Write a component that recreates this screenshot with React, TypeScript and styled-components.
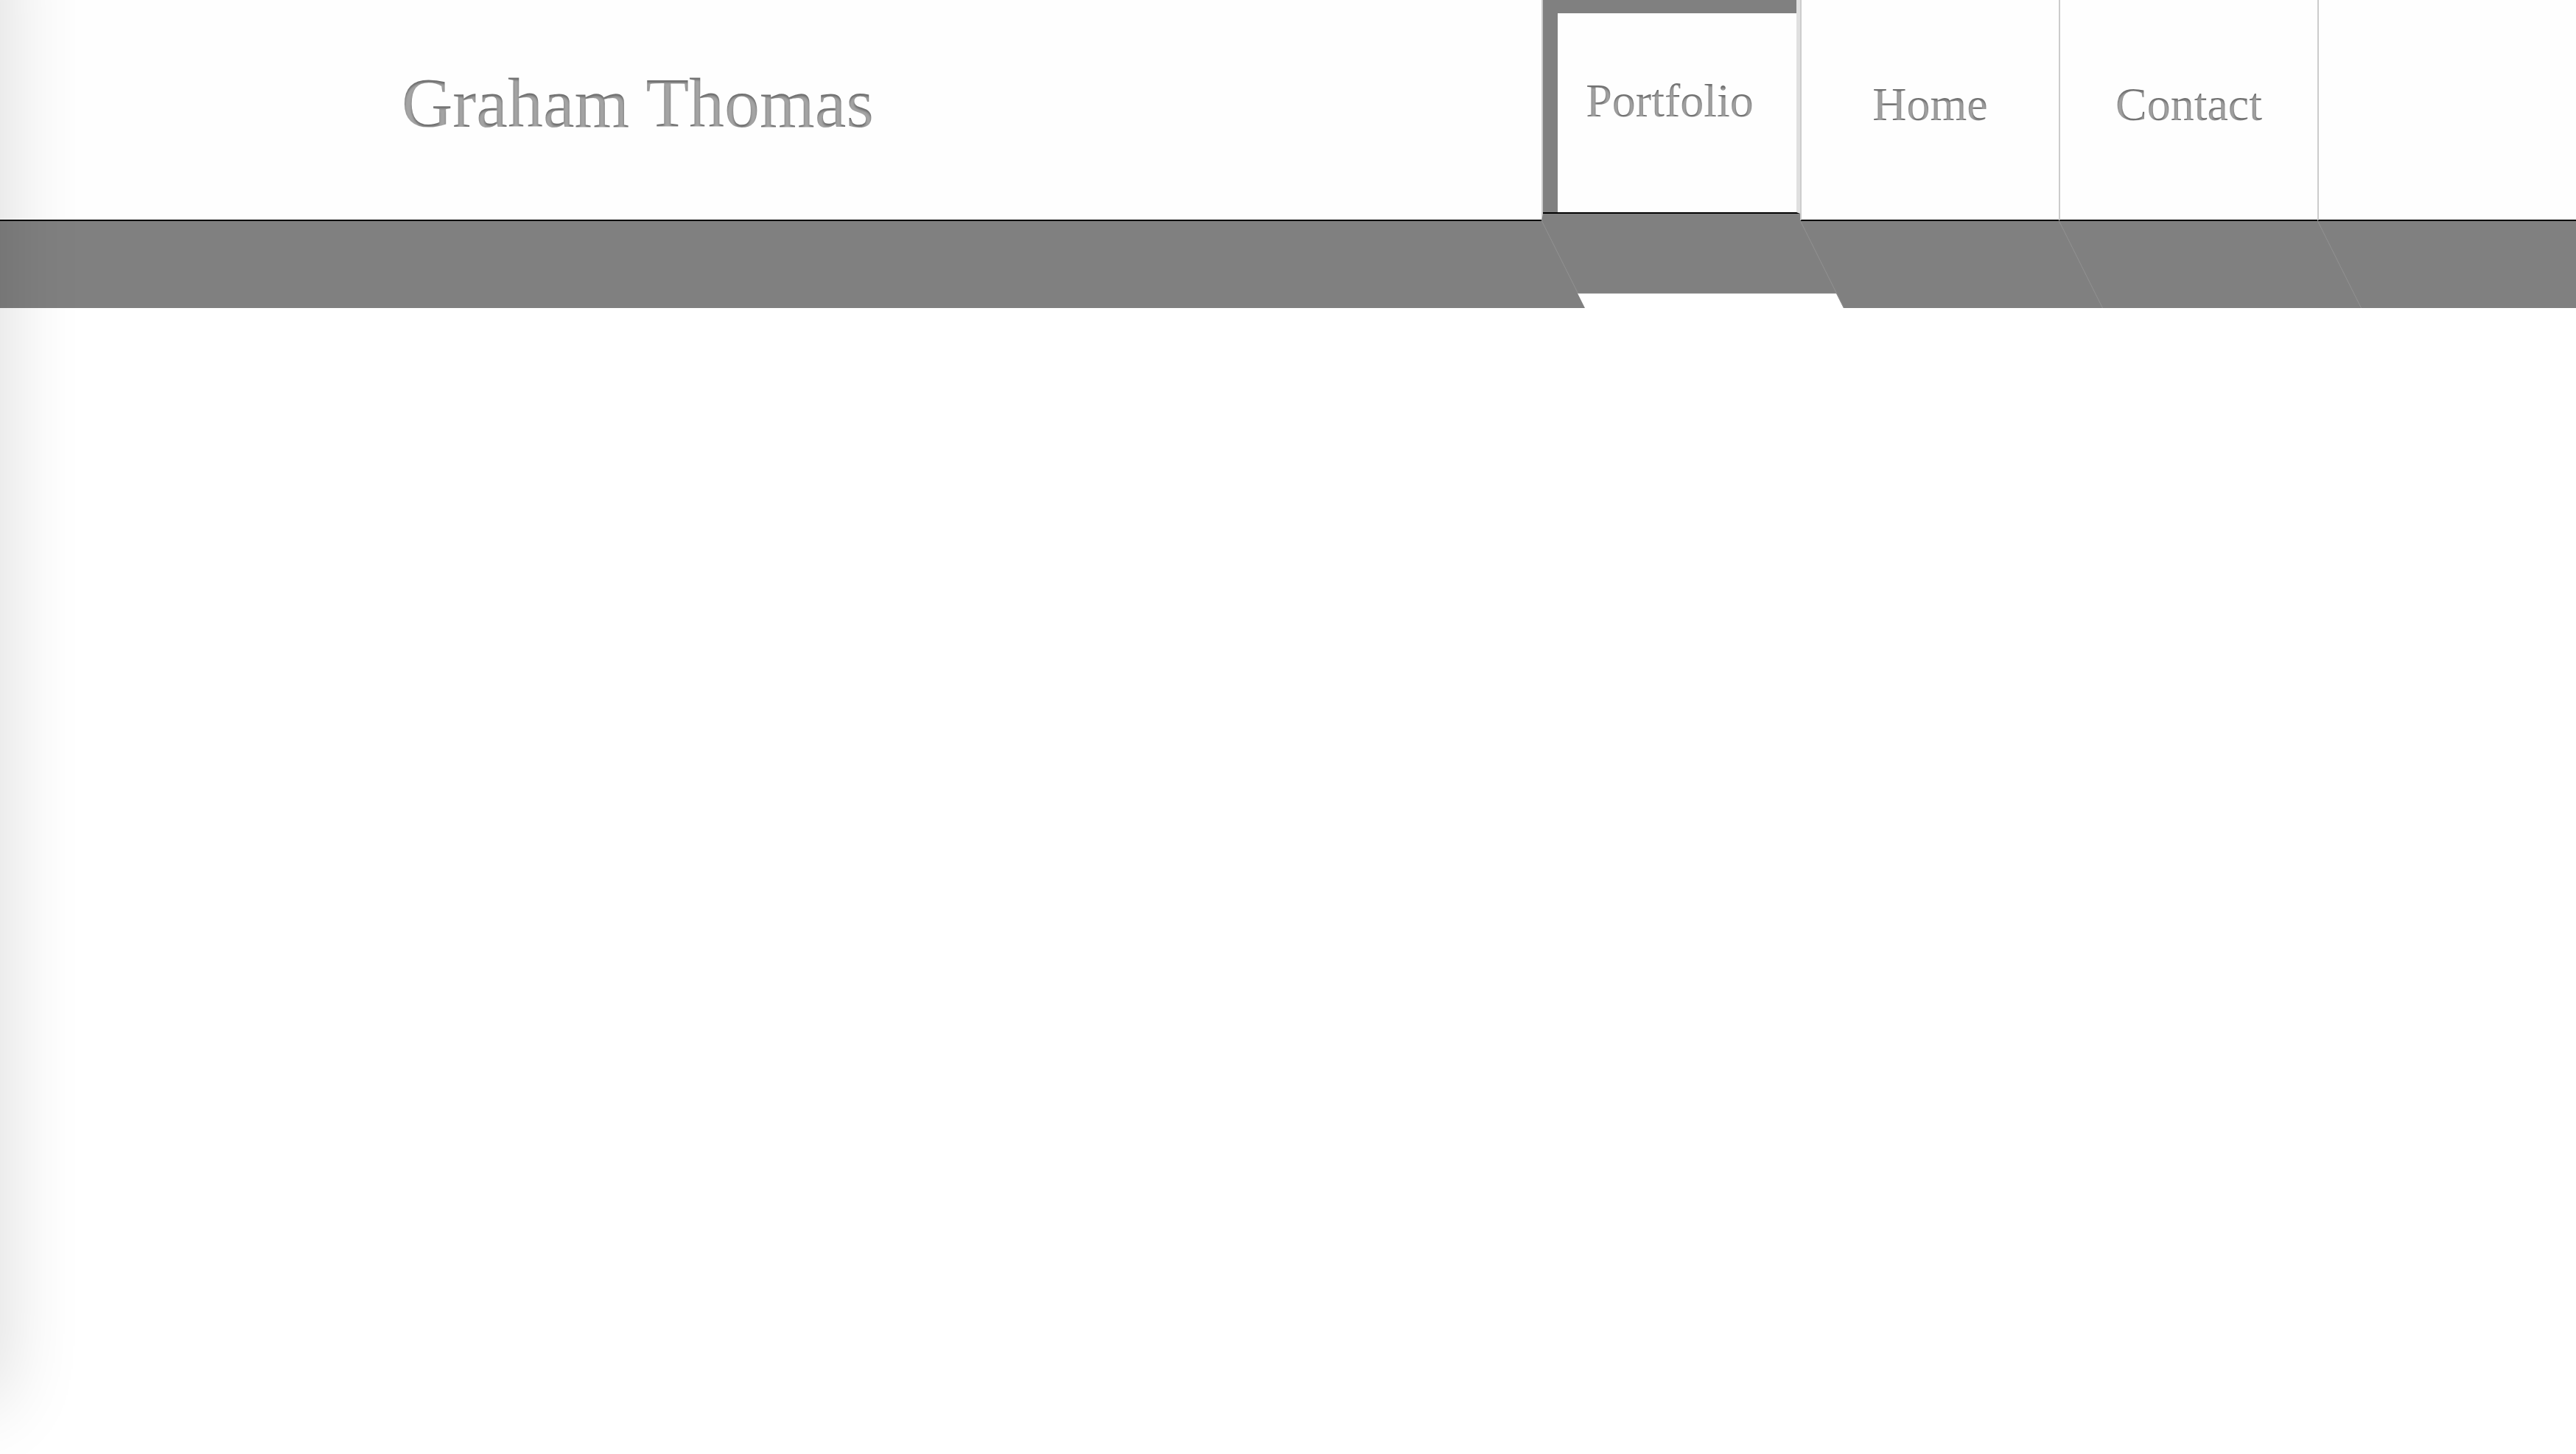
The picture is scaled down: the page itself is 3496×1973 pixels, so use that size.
import React from "react";
import styled, { createGlobalStyle, css } from "styled-components";

const GREY = "#808080";
const ITEM_W = 351;
const SKEW = "26.565deg";

const GlobalStyle = createGlobalStyle`
  html, body {
    margin: 0;
    padding: 0;
    background: #ffffff;
  }
  body {
    font-family: "Liberation Serif", "Times New Roman", serif;
    overflow-x: hidden;
  }
  #root {
    min-height: 100vh;
  }
`;

// letterpress look: dark fill with a soft light shadow pushed inside the glyphs
const pressed = css`
  color: transparent;
  background-color: #6c6c6c;
  -webkit-background-clip: text;
  background-clip: text;
  text-shadow: 0 3px 3px rgba(255, 255, 255, 0.38);
`;

const Page = styled.div`
  min-height: 100vh;
  background: #ffffff;
`;

const EdgeShade = styled.div`
  position: fixed;
  top: -100px;
  left: -100px;
  width: 100px;
  height: 2000px;
  box-shadow: 0 0 110px rgba(0, 0, 0, 0.16);
  pointer-events: none;
  z-index: 10;
`;

const Masthead = styled.header`
  overflow: hidden;
  background: #fefefe;
`;

const TopBar = styled.div`
  display: flex;
  height: 300px;
`;

const Brand = styled.div`
  flex: 1;
  display: flex;
  align-items: center;
  box-sizing: border-box;
  padding: 0 0 18px 545px;
  border-bottom: 2px solid #000;
`;

const Title = styled.h1`
  margin: 0;
  font-size: 96px;
  font-weight: 400;
  line-height: 1;
  ${pressed}
`;

const Nav = styled.nav`
  display: flex;
`;

const NavItem = styled.a<{ $active?: boolean }>`
  width: ${ITEM_W}px;
  box-sizing: border-box;
  display: flex;
  flex-direction: column;
  border-left: 2px solid #cccccc;
  border-bottom: ${(p) => (p.$active ? `10px solid ${GREY}` : "2px solid #000")};
  text-decoration: none;
  cursor: pointer;
`;

const Tab = styled.div<{ $active?: boolean }>`
  flex: 1;
  display: flex;
  align-items: center;
  justify-content: center;
  box-sizing: border-box;
  padding-bottom: 14px;
  ${(p) =>
    p.$active &&
    css`
      background: #fefefe;
      border-bottom: 2px solid #000;
      border-right: 5px solid #e0e0e0;
      box-shadow: inset 20px 18px 0 ${GREY};
    `}
`;

const Label = styled.span`
  font-size: 64px;
  line-height: 1;
  ${pressed}
`;

const Band = styled.div`
  display: flex;
  height: 118px;
  background: ${GREY};
`;

const BandLead = styled.div`
  flex: 1;
`;

const Facet = styled.div<{ $active?: boolean }>`
  flex: 0 0 ${ITEM_W}px;
  box-sizing: border-box;
  border-left: 1px solid rgba(255, 255, 255, 0.14);
  transform-origin: 0 0;
  transform: skewX(${SKEW});
  background: ${(p) =>
    p.$active ? `linear-gradient(${GREY} 98px, #ffffff 98px)` : GREY};
`;

const links = [
  { label: "Portfolio", active: true },
  { label: "Home", active: false },
  { label: "Contact", active: false },
  { label: "", active: false },
];

export default function App() {
  return (
    <Page>
      <GlobalStyle />
      <EdgeShade />
      <Masthead>
        <TopBar>
          <Brand>
            <Title>Graham Thomas</Title>
          </Brand>
          <Nav>
            {links.map((l, i) => (
              <NavItem key={i} $active={l.active}>
                <Tab $active={l.active}>
                  {l.label && <Label>{l.label}</Label>}
                </Tab>
              </NavItem>
            ))}
          </Nav>
        </TopBar>
        <Band>
          <BandLead />
          {links.map((l, i) => (
            <Facet key={i} $active={l.active} />
          ))}
        </Band>
      </Masthead>
    </Page>
  );
}
